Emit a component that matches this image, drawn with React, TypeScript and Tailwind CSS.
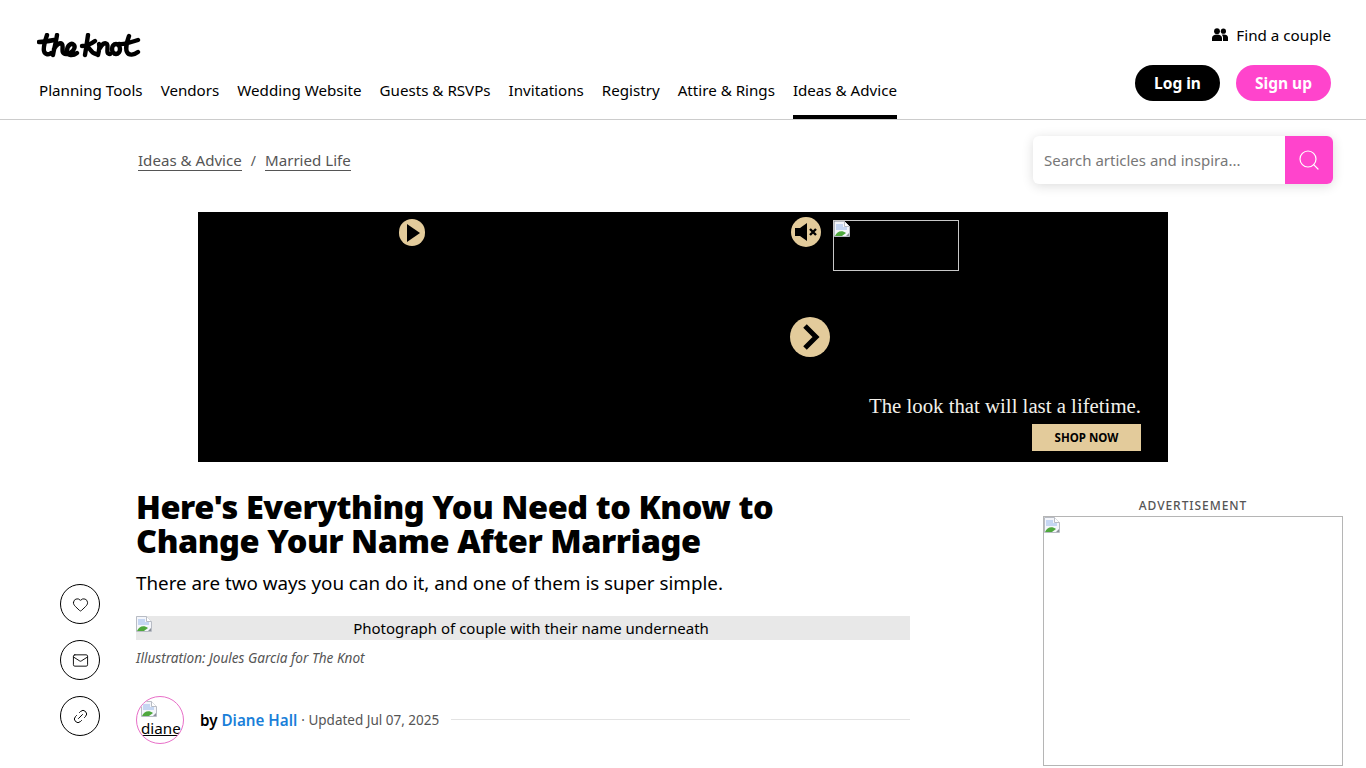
import { Heart, Link2, Mail, Search } from 'lucide-react'

const navItems = [
  'Planning Tools',
  'Vendors',
  'Wedding Website',
  'Guests & RSVPs',
  'Invitations',
  'Registry',
  'Attire & Rings',
  'Ideas & Advice',
]

function Logo() {
  return (
    <svg width="104" height="25" viewBox="0 0 104 25" fill="none" stroke="#000" strokeWidth="4.4" strokeLinecap="round" strokeLinejoin="round">
      {/* the */}
      <path d="M2 9 C7 9 12 8 17 7" />
      <path d="M10 2 C8 8 6 14 7 18 C8 22 12 22 14 20" />
      <path d="M20 2 C19 9 17 16 16 22 M17 16 C19 12 23 9 25 11 C27 14 23 21 29 21 C35 21 39 15 37 12 C34 9 30 13 30 18 C30 23 36 23 40 20" />
      {/* knot */}
      <path d="M51 2 C50 9 49 16 48 22 M45 13 C49 13 54 11 58 8 M50 13 C53 15 54 20 59 21" />
      <path d="M62 11 C63 14 62 18 61 22 M63 15 C65 11 68 9 70 11 C72 14 68 21 73 21" />
      <ellipse cx="79" cy="16" rx="4" ry="5" />
      <path d="M82 11 C86 12 92 10 101 7 M92 3 C90 9 88 15 90 19 C92 23 97 22 101 19" />
    </svg>
  )
}

function CoupleIcon() {
  return (
    <svg width="16" height="14" viewBox="0 0 16 14" fill="#000">
      <circle cx="5" cy="3.2" r="2.9" />
      <circle cx="11.4" cy="3.2" r="2.6" />
      <path d="M0 13 V10 C0 7.8 2 6.6 5 6.6 C8 6.6 10 7.8 10 10 V13 Z" />
      <path d="M11 13 V9.6 C11 8.4 10.5 7.4 9.6 6.8 C10.4 6.6 11 6.5 11.8 6.5 C14.2 6.5 16 7.6 16 9.6 V13 Z" />
    </svg>
  )
}

function BrokenImage({ className }: { className?: string }) {
  return (
    <svg className={className} width="16" height="16" viewBox="0 0 16 16">
      <path d="M0.5 0.5 H10.5 L15.5 5.5 V15.5 H0.5 Z" fill="#f4f6fb" stroke="#b8bcc4" />
      <path d="M10.5 0.5 V5.5 H15.5" fill="#fff" stroke="#b8bcc4" />
      <path d="M2 3 H9 V6 H13 V9 H2 Z" fill="#c5d6f2" />
      <path d="M1 15 C3 10 8 9 12 12 L8 15 Z" fill="#4fa83d" />
      <path d="M12 15 L15 12 V15 Z" fill="#8a8f98" />
    </svg>
  )
}

function AdBanner() {
  return (
    <div className="relative mx-auto mt-[28px] h-[250px] w-[970px] bg-black">
      <div className="absolute left-[201px] top-[7px] flex h-[27px] w-[26px] items-center justify-center rounded-full bg-[#e3cb9b]">
        <svg width="18" height="20" viewBox="0 0 18 20"><path d="M4 1 L17 10 L4 19 Z" fill="#000" /></svg>
      </div>
      <div className="absolute left-[593px] top-[5px] flex h-[30px] w-[30px] items-center justify-center rounded-full bg-[#e3cb9b]">
        <svg width="24" height="20" viewBox="0 0 24 20">
          <path d="M1 6 H6 L13 1 V19 L6 14 H1 Z" fill="#000" />
          <path d="M16 7 L22 13 M22 7 L16 13" stroke="#000" strokeWidth="2.4" />
        </svg>
      </div>
      <div className="absolute left-[635px] top-[8px] h-[51px] w-[126px] border border-[#c8c8c8]">
        <BrokenImage />
      </div>
      <div className="absolute left-[592px] top-[105px] flex h-[40px] w-[40px] items-center justify-center rounded-full bg-[#e3cb9b]">
        <svg width="22" height="28" viewBox="0 0 22 28" fill="none"><path d="M6 3 L17 14 L6 25" stroke="#000" strokeWidth="5" /></svg>
      </div>
      <p className="absolute right-[27px] top-[180px] font-['Liberation_Serif',serif] text-[20.8px] leading-[28px] whitespace-nowrap text-[#f2f0ea]">
        The look that will last a lifetime.
      </p>
      <div className="absolute left-[834px] top-[212px] flex h-[27px] w-[109px] items-center justify-center bg-[#e3cb9b] text-[11.5px] font-bold text-black">
        SHOP NOW
      </div>
    </div>
  )
}

export default function App() {
  return (
    <div className="h-screen overflow-hidden bg-white font-['Noto_Sans',sans-serif] text-black">
      <header className="flex h-[120px] justify-between border-b border-[#cccccc] pl-[37px] pr-[35px]">
        <div className="flex flex-col">
          <div className="mt-[33px]">
            <Logo />
          </div>
          <nav className="mt-[17px] ml-[2px] flex flex-1 gap-[18px] text-[15.15px]">
            {navItems.map((item) => (
              <a
                key={item}
                className={`flex h-full pt-[4px] whitespace-nowrap ${item === 'Ideas & Advice' ? 'border-b-4 border-black' : ''}`}
              >
                {item}
              </a>
            ))}
          </nav>
        </div>
        <div className="flex flex-col items-end">
          <a className="mt-[25px] flex h-[20px] items-center gap-[8px] text-[15.2px]">
            <CoupleIcon />
            Find a couple
          </a>
          <div className="mt-[20px] flex gap-[16px]">
            <button className="h-[36px] w-[85px] rounded-full bg-black pt-px text-[15.5px] font-bold text-white">Log in</button>
            <button className="h-[36px] w-[95px] rounded-full bg-[#ff44cc] pt-px text-[15.5px] font-bold text-white">Sign up</button>
          </div>
        </div>
      </header>

      <main>
        <div className="flex h-[64px] items-start justify-between pl-[138px] pr-[33px] pt-[16px]">
          <div className="mt-[14px] flex items-center gap-[9px] text-[15.1px] leading-[20px] text-[#555555]">
            <a className="border-b border-[#555555]">Ideas &amp; Advice</a>
            <span className="text-[14px]">/</span>
            <a className="border-b border-[#555555]">Married Life</a>
          </div>
          <div className="flex h-[48px] w-[300px] rounded-[6px] bg-white shadow-[0_2px_12px_rgba(0,0,0,0.14)]">
            <div className="flex flex-1 items-center pl-[11px] pt-px text-[15px] whitespace-nowrap text-[#777777]">Search articles and inspira...</div>
            <div className="flex w-[48px] items-center justify-center rounded-r-[6px] bg-[#ff44cc]">
              <Search className="h-[24px] w-[24px] text-white" strokeWidth={1.2} />
            </div>
          </div>
        </div>

        <AdBanner />

        <div className="mt-[28px] flex justify-between pl-[136px] pr-[23px]">
          <article className="w-[774px]">
            <h1 className="text-[32.5px] leading-[34px] font-black tracking-[-0.45px]">
              Here's Everything You Need to Know to
              <br />
              Change Your Name After Marriage
            </h1>
            <p className="mt-[11px] text-[18.8px] leading-[28px]">There are two ways you can do it, and one of them is super simple.</p>
            <div className="relative mt-[19px] h-[24px] bg-[#e8e8e8] pl-[16px] text-center text-[15px] leading-[24px]">
              <BrokenImage className="absolute left-0 top-0" />
              Photograph of couple with their name underneath
            </div>
            <p className="mt-[9px] text-[13.6px] leading-[18px] text-[#555555] italic">Illustration: Joules Garcia for The Knot</p>
            <div className="mt-[29px] flex items-center">
              <div className="h-[48px] w-[48px] overflow-hidden rounded-full border border-[#e86fc8] pl-[4px] pt-[4px] text-[15.2px] leading-[22px] underline">
                <BrokenImage />
                diane
              </div>
              <p className="ml-[16px] text-[15.2px] font-semibold whitespace-nowrap">
                by <a className="text-[#1a7fd9]">Diane Hall</a>
              </p>
              <span className="ml-[4px] text-[13.5px] whitespace-nowrap text-[#555555]">· Updated Jul 07, 2025</span>
              <div className="mb-[2px] ml-[12px] h-px flex-1 bg-[#e3e3e3]" />
            </div>
          </article>
          <aside className="mt-[6px] flex w-[300px] flex-col">
            <p className="text-center text-[12px] leading-[20px] font-medium tracking-[0.95px] text-[#555555]">ADVERTISEMENT</p>
            <div className="h-[250px] border border-[#b5b5b5]">
              <BrokenImage />
            </div>
          </aside>
        </div>
      </main>

      {/* share buttons are fixed to the viewport */}
      <div className="fixed left-[60px] top-[584px] flex flex-col gap-[16px]">
        <button className="flex h-[40px] w-[40px] items-center justify-center rounded-full border border-black">
          <Heart className="h-[17px] w-[17px]" strokeWidth={1.3} />
        </button>
        <button className="flex h-[40px] w-[40px] items-center justify-center rounded-full border border-black">
          <Mail className="h-[17px] w-[17px]" strokeWidth={1.3} />
        </button>
        <button className="flex h-[40px] w-[40px] items-center justify-center rounded-full border border-black">
          <Link2 className="h-[17px] w-[17px] -rotate-45" strokeWidth={1.3} />
        </button>
      </div>
    </div>
  )
}
